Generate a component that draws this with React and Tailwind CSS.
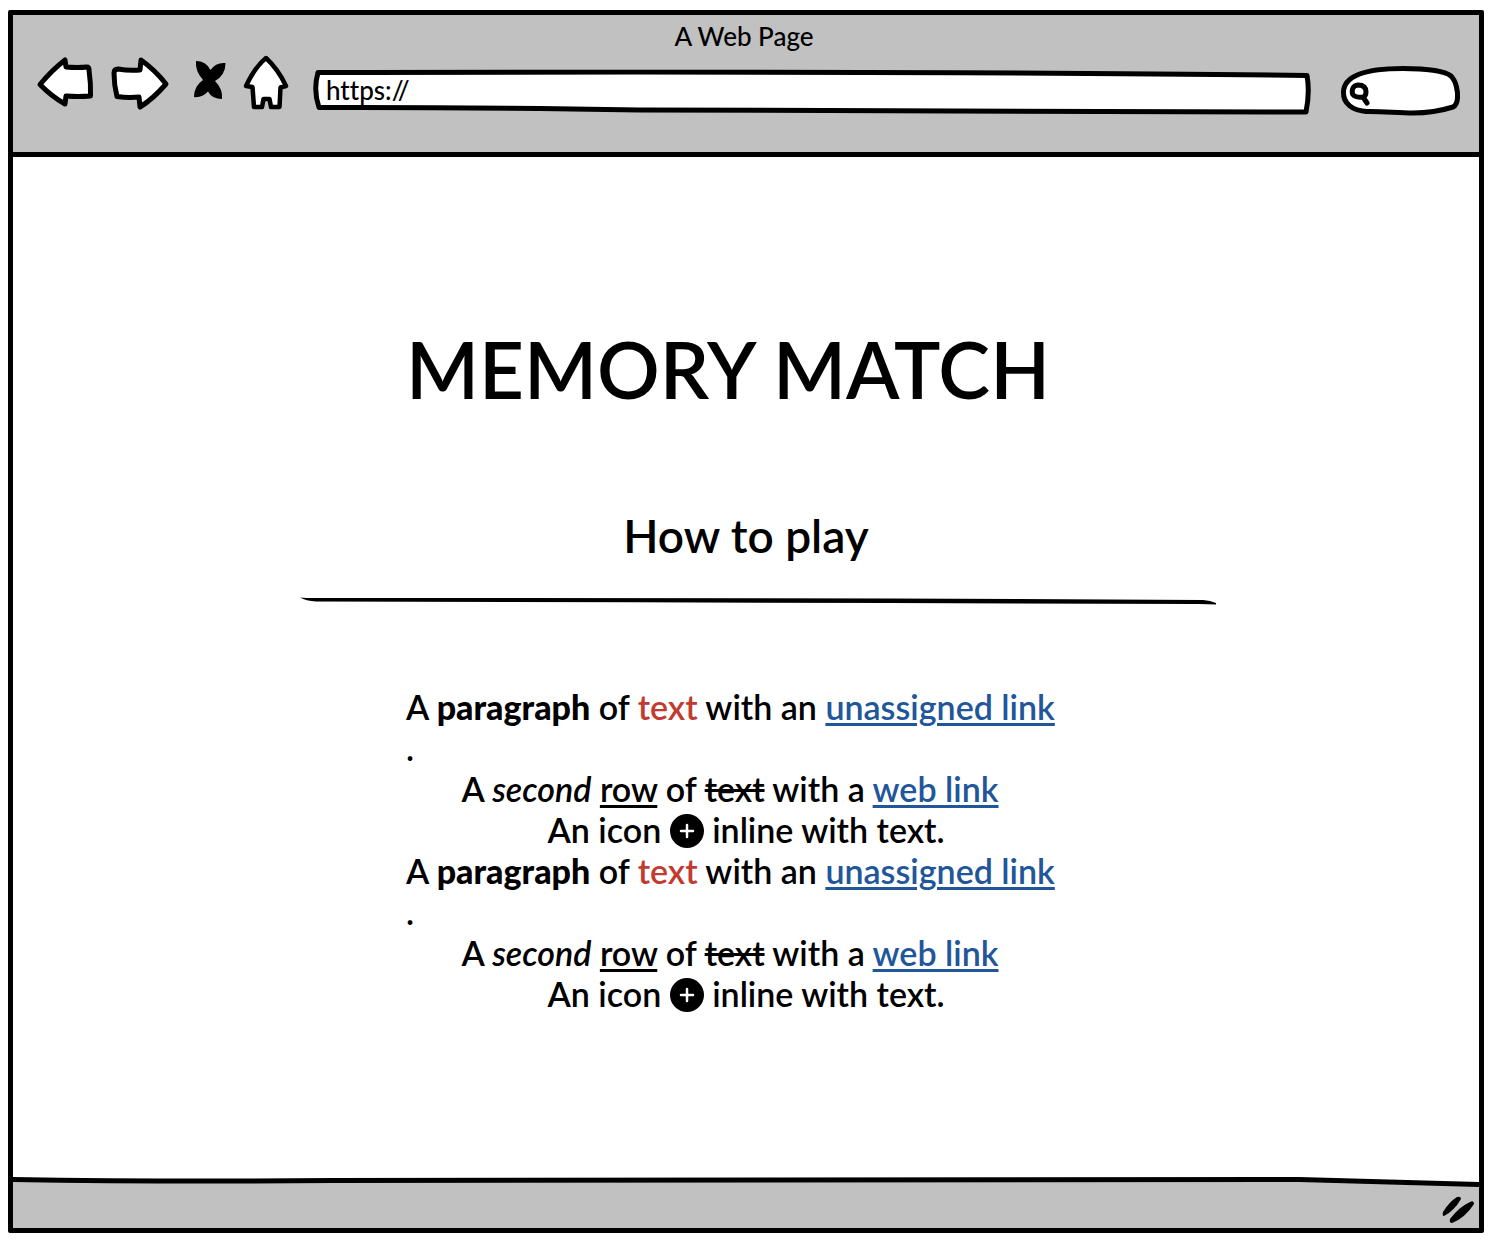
import React from "react";

const ink = {
  stroke: "#000",
  strokeWidth: 5,
  strokeLinejoin: "round",
  strokeLinecap: "round",
};

function BackIcon() {
  return (
    <svg viewBox="36 54 58 62" className="h-[62px] w-[58px]" aria-hidden="true">
      <path {...ink} fill="#fff" d="M40 84.500Q52 70 65 60L66 67Q78 68 87 67Q89 67 89 70Q91 84 90.500 96Q78 97 66 96L65 104Q51 96 40 84.500Z" />
    </svg>
  );
}

function ForwardIcon() {
  return (
    <svg viewBox="110 54 60 62" className="h-[62px] w-[60px]" aria-hidden="true">
      <path {...ink} fill="#fff" d="M118 69Q129 71 140 70L141 60Q155 70 166 84Q153 99 140 107L139 97Q128 98 117 96.500Q114 85 114 73Q114 69 118 69Z" />
    </svg>
  );
}

function StopIcon() {
  return (
    <svg viewBox="192 54 36 62" className="h-[62px] w-[36px]" aria-hidden="true">
      <path d="M196 61Q206 61 210.500 70Q216 62 225.500 63Q225.500 75 215 81Q223 89 222 99Q212 99 208 91.500Q202 98 194 97Q194 86 203 80Q195 71 196 61Z" />
    </svg>
  );
}

function HomeIcon() {
  return (
    <svg viewBox="242 54 48 62" className="h-[62px] w-[48px]" aria-hidden="true">
      <path {...ink} strokeWidth="4.500" fill="#fff" d="M266 58Q278 69 286 86L280.500 87.500L279.500 107L271 107L269.500 99H263.500L262 107L254 107L252.500 87L246 86Q255 67 266 58Z" />
    </svg>
  );
}

function Play() {
  return (
    <div>
      <p className="whitespace-nowrap">
        A <b className="font-black">paragraph</b> of <span className="text-[#c23b30]">text</span> with an{" "}
        <a href="#unassigned" className="text-[#22569a] underline decoration-[3px] underline-offset-[3px]">unassigned link</a>
      </p>
      <p>.</p>
      <p className="pr-8 text-center">
        A <i>second</i> <u className="decoration-[3px] underline-offset-[3px]">row</u> of <s className="decoration-[3px]">text</s> with a{" "}
        <a href="#web" className="text-[#22569a] underline decoration-[3px] underline-offset-[3px]">web link</a>
      </p>
      <p className="text-center">
        An icon{" "}
        <svg viewBox="0 0 34 34" className="inline-block size-[34px] align-[-5px]" role="img" aria-label="plus">
          <circle cx="17" cy="17" r="17" />
          <path d="M17 11v12M11 17h12" stroke="#fff" strokeWidth="2.500" strokeLinecap="round" />
        </svg>{" "}
        inline with text.
      </p>
    </div>
  );
}

export default function App() {
  return (
    <div className="flex min-h-screen flex-col bg-white pt-[10px] pr-[12px] pb-[17px] pl-[8px] font-['Lato',sans-serif] font-semibold text-black [font-variant-ligatures:none]">
      <div className="flex flex-1 flex-col rounded-[2px] border-[5px] border-black">
        <header className="border-b-[5px] border-black bg-[#c1c1c1] pb-[36px]">
          <div className="pr-1 pt-1 text-center text-[26px] leading-[35px] font-medium">A Web Page</div>
          <div className="flex items-center pr-[17px] pl-[23px]">
            <button type="button" aria-label="Back" className="mr-4 shrink-0"><BackIcon /></button>
            <button type="button" aria-label="Forward" className="mr-[22px] shrink-0"><ForwardIcon /></button>
            <button type="button" aria-label="Stop" className="mr-3.5 shrink-0"><StopIcon /></button>
            <button type="button" aria-label="Home" className="mr-[22px] shrink-0"><HomeIcon /></button>
            <div className="relative mr-7 h-[62px] min-w-0 flex-1">
              <svg viewBox="312 54 1000 62" preserveAspectRatio="none" className="absolute inset-0 size-full" aria-hidden="true">
                <path {...ink} vectorEffect="non-scaling-stroke" fill="#fff" d="M318 72.500Q1000 71 1307 75.500Q1310 92 1306 112Q900 112 640 110Q460 107 319 107.500Q313 90 318 72.500Z" />
              </svg>
              <input aria-label="Address" defaultValue="https://" className="relative h-[72px] w-full bg-transparent px-3.5 text-[26px] font-medium outline-none" />
            </div>
            <div className="relative h-[62px] w-[122px] shrink-0">
              <svg viewBox="1340 54 122 62" className="absolute inset-0 size-full" aria-hidden="true">
                <path {...ink} fill="#fff" d="M1367 111.500C1352 111 1343 103 1343.500 92C1344 75 1368 68.500 1403 68.500C1425 68.500 1445 71 1451 76C1456 81 1458 91 1457.500 98Q1457 105 1453 107Q1434 113 1413 113C1397 113 1382 111 1365 111.500" />
                <path {...ink} fill="none" d="M1363 97Q1355 98 1352.500 94Q1351 86 1358 85Q1366 85 1366 92Q1366 96 1363 97L1367 103" />
              </svg>
              <input type="search" aria-label="Search" className="relative h-[62px] w-full bg-transparent pr-4 pl-8 text-[20px] outline-none" />
            </div>
          </div>
        </header>

        <main className="flex flex-1 flex-col items-center pt-[160px]">
          <h1 className="pr-9 text-[78px] leading-[104px]">MEMORY MATCH</h1>
          <h2 className="mt-[85px] text-[46px] leading-[60px]">How to play</h2>
          <svg viewBox="300 594 918 14" preserveAspectRatio="none" className="mt-[28px] ml-6 h-[14px] w-[62.500%]" aria-hidden="true">
            <path d="M300 597.500Q305 598 316 598Q760 597.500 1205 600Q1212 600.500 1218 603V604.500Q1210 604.500 1200 604Q760 602.500 316 601.500Q306 601 300 597.500Z" />
          </svg>
          <div className="mt-[78px] w-[680px] text-[34px] leading-[41px]">
            <Play />
            <Play />
          </div>
        </main>

        <footer className="flex min-h-[51px] flex-col bg-[#c1c1c1]">
          <svg viewBox="0 0 1466 10" preserveAspectRatio="none" className="h-[10px] w-full" aria-hidden="true">
            <path fill="#fff" d="M0 0H1466V7Q1300 3 1200 3H0Z" />
            <path fill="none" stroke="#000" strokeWidth="5" d="M0 2.500Q150 5 320 3.500Q800 1 1286 2.500L1466 7.500" />
          </svg>
          <svg viewBox="1440 1194 36 32" className="mr-[3px] mt-[7px] h-8 w-9 self-end" aria-hidden="true">
            <path d="M1457 1197Q1461 1196 1461 1199Q1454 1211 1444 1216Q1442 1216 1443 1212Q1449 1202 1457 1197ZM1470 1202Q1474 1200 1474 1204Q1465 1218 1452 1223Q1449 1223 1450 1219Q1459 1207 1470 1202Z" />
          </svg>
        </footer>
      </div>
    </div>
  );
}
